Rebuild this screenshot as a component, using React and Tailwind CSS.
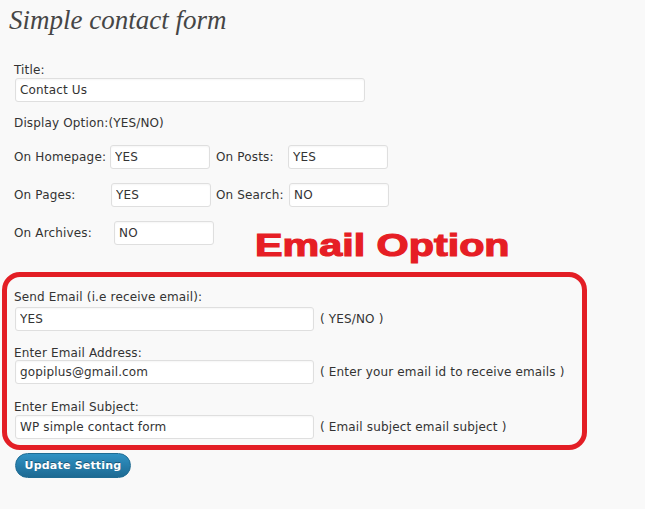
import React from "react";

const inputCls =
  "h-[24px] bg-white border border-[#dfdfdf] rounded-[3px] pl-[4px] text-[#333] outline-none shadow-[inset_0_1px_2px_rgba(0,0,0,0.04)]";

function Field({ value, className }) {
  return <input readOnly value={value} className={`${inputCls} ${className}`} />;
}

export default function App() {
  return (
    <div className="w-[645px] h-[509px] overflow-hidden bg-[#f9f9f9] text-[#333] text-[12px] leading-[14px] tracking-[0.15px] font-['DejaVu_Sans',sans-serif] relative">
      <h2 className="pl-[9px] pt-[4px] h-[36px] text-[27px] leading-[32px] tracking-normal italic font-normal text-[#464646] font-['Liberation_Serif',serif]">
        Simple contact form
      </h2>

      <div className="pl-[14px]">
        <div className="mt-[27px]">Title:</div>
        <Field value="Contact Us" className="mt-[1px] ml-[1px] w-[350px]" />
        <div className="mt-[14px]">Display Option:(YES/NO)</div>

        <div className="mt-[15px] flex items-center h-[24px]">
          <span className="w-[96px]">On Homepage:</span>
          <Field value="YES" className="w-[100px]" />
          <span className="ml-[6px] w-[72px]">On Posts:</span>
          <Field value="YES" className="w-[100px]" />
        </div>
        <div className="mt-[14px] flex items-center h-[24px]">
          <span className="w-[97px]">On Pages:</span>
          <Field value="YES" className="w-[100px]" />
          <span className="ml-[5px] w-[73px]">On Search:</span>
          <Field value="NO" className="w-[100px]" />
        </div>
        <div className="mt-[14px] flex items-center h-[24px] relative">
          <span className="w-[100px]">On Archives:</span>
          <Field value="NO" className="w-[100px]" />
          <span className="absolute left-[241px] top-[8px] inline-block origin-left scale-x-[1.29] whitespace-nowrap text-[32px] leading-[32px] tracking-normal font-bold text-[#e61e25] [-webkit-text-stroke:1.2px_#e61e25] font-['Liberation_Sans',sans-serif]">
            Email Option
          </span>
        </div>
      </div>

      <div className="mt-[27px] ml-[2px] w-[585px] h-[178px] border-[5px] border-[#e31e25] rounded-[18px] pl-[7px] pt-[13px]">
        <div>Send Email (i.e receive email):</div>
        <div className="mt-[3px] flex items-center">
          <Field value="YES" className="ml-[1px] w-[299px]" />
          <span className="ml-[6px]">( YES/NO )</span>
        </div>
        <div className="mt-[15px]">Enter Email Address:</div>
        <div className="flex items-center">
          <Field value="gopiplus@gmail.com" className="ml-[1px] w-[299px]" />
          <span className="ml-[6px]">( Enter your email id to receive emails )</span>
        </div>
        <div className="mt-[16px]">Enter Email Subject:</div>
        <div className="mt-[1px] flex items-center">
          <Field value="WP simple contact form" className="ml-[1px] w-[299px]" />
          <span className="ml-[6px]">( Email subject email subject )</span>
        </div>
      </div>

      <div className="pl-[15px] mt-[3px]">
        <button className="w-[116px] h-[25px] rounded-[13px] border border-[#1f6c93] bg-linear-to-b from-[#3092c4] to-[#1d6a93] text-white text-[11px] font-bold leading-[23px] tracking-[0.2px] [text-shadow:0_-1px_0_rgba(0,0,0,0.35)]">
          Update Setting
        </button>
      </div>
    </div>
  );
}
